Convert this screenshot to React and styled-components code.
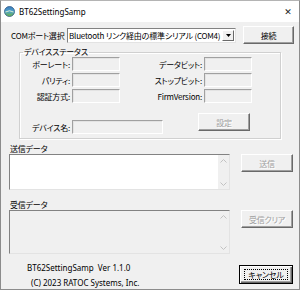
import React from "react";
import styled, { createGlobalStyle } from "styled-components";

const Global = createGlobalStyle`
  html, body { margin: 0; padding: 0; background: #ffffff; }
  body {
    font-family: "Noto Sans CJK JP", "Liberation Sans", sans-serif;
    font-size: 8px;
    letter-spacing: -0.2px;
    font-feature-settings: "palt";
  }
  * { box-sizing: border-box; }
`;

const Window = styled.div`
  width: 300px;
  height: 290px;
  border: 1px solid #8c8c8c;
  border-top-color: #b4b4b4;
  background: #f0f0f0;
  display: flex;
  flex-direction: column;
  overflow: hidden;
`;

const TitleBar = styled.div`
  height: 21px;
  background: #ffffff;
  display: flex;
  align-items: center;
  padding-left: 3px;
  padding-right: 6px;
  flex-shrink: 0;
`;

const Title = styled.span`
  font-family: "Noto Sans", "Liberation Sans", sans-serif;
  font-size: 8px;
  letter-spacing: 0;
  color: #000;
  margin-left: 4px;
  flex: 1;
`;

const CloseGlyph = styled.span`
  font-family: "DejaVu Sans", sans-serif;
  font-size: 9px;
  color: #222;
  width: 10px;
  text-align: center;
`;

const Body = styled.div`
  flex: 1;
  display: flex;
  flex-direction: column;
  padding: 4px 0 0 8px;
`;

const PortRow = styled.div`
  display: flex;
  align-items: center;
  height: 18px;
  padding-left: 2px;
`;

const Label = styled.span`
  color: #000;
  white-space: nowrap;
  line-height: 11px;
  width: ${(p) => (p.$w ? `${p.$w}px` : "auto")};
  text-align: ${(p) => (p.$right ? "right" : "left")};
`;

const Combo = styled.div`
  width: 169px;
  height: 15px;
  background: #fff;
  border: 1px solid;
  border-color: #828282 #e3e3e3 #e3e3e3 #828282;
  display: flex;
  align-items: center;
  padding-left: 1px;
  padding-right: 1px;
`;

const ComboText = styled.span`
  flex: 1;
  white-space: nowrap;
  overflow: hidden;
  color: #000;
  line-height: 11px;
`;

const ComboButton = styled.span`
  width: 12px;
  height: 11px;
  background: #f0f0f0;
  border: 1px solid;
  border-color: #fff #696969 #696969 #fff;
  display: flex;
  align-items: center;
  justify-content: center;
`;

const Button = styled.button`
  font-family: "Noto Sans CJK JP", "Liberation Sans", sans-serif;
  font-size: 8px;
  letter-spacing: -0.2px;
  font-feature-settings: "palt";
  width: ${(p) => p.$w || 52}px;
  height: ${(p) => p.$h || 18}px;
  margin: 0;
  margin-left: ${(p) => p.$ml || 0}px;
  margin-right: ${(p) => p.$mr || 0}px;
  margin-top: ${(p) => p.$mt || 0}px;
  padding: 0;
  background: #f0f0f0;
  border: 1px solid;
  border-color: ${(p) => (p.$default ? "#000" : "#fff #696969 #696969 #fff")};
  box-shadow: ${(p) =>
    p.$default
      ? "inset 1px 1px #fff, inset -1px -1px #696969, inset -2px -2px #a0a0a0"
      : "inset -1px -1px #a0a0a0"};
  color: ${(p) => (p.disabled ? "#a0a0a0" : "#000")};
  text-shadow: ${(p) => (p.disabled ? "1px 1px #fff" : "none")};
  display: flex;
  align-items: center;
  justify-content: center;
  flex-shrink: 0;
`;

const FocusRing = styled.span`
  display: flex;
  align-items: center;
  justify-content: center;
  width: 44px;
  height: 11px;
  border: 1px dotted #000;
  white-space: nowrap;
`;

const Group = styled.fieldset`
  margin: 3px 0 0 10px;
  padding: 0 0 4px 0;
  width: 262px;
  border: 1px solid #d0d0d0;
  box-shadow: inset 1px 1px #fff, 1px 1px #fff;
  min-width: 0;
`;

const Legend = styled.legend`
  padding: 0 1px;
  margin-left: 3px;
  line-height: 10px;
  color: #000;
`;

const StatusGrid = styled.div`
  display: grid;
  grid-template-columns: 50px 48px 80px 48px;
  column-gap: 2px;
  row-gap: 2px;
  align-items: center;
`;

const Field = styled.div`
  width: ${(p) => p.$w || 48}px;
  height: 14px;
  background: #f0f0f0;
  border: 1px solid;
  border-color: #a0a0a0 #fff #fff #a0a0a0;
  box-shadow: inset 1px 1px #e3e3e3;
`;

const NameRow = styled.div`
  display: flex;
  align-items: flex-start;
  margin-top: 10px;
`;

const NameLabelBox = styled.div`
  display: flex;
  align-items: center;
  gap: 2px;
  margin-top: 7px;
`;

const SectionLabel = styled.div`
  color: #000;
  line-height: 11px;
  margin-top: ${(p) => p.$mt || 0}px;
  padding-left: 1px;
`;

const DataRow = styled.div`
  display: flex;
  align-items: flex-start;
  gap: 11px;
`;

const DataBox = styled.div`
  width: 221px;
  height: ${(p) => p.$h}px;
  background: ${(p) => (p.$disabled ? "#f0f0f0" : "#fff")};
  border: 1px solid;
  border-color: #828282 #e3e3e3 #e3e3e3 #828282;
  display: flex;
  justify-content: flex-end;
`;

const ScrollBar = styled.div`
  width: 11px;
  background: #f0f0f0;
  display: flex;
  flex-direction: column;
  justify-content: space-between;
  align-items: center;
  padding: 4px 0 3px;
`;

const Footer = styled.div`
  display: flex;
  align-items: flex-start;
  margin-top: 4px;
`;

const Credits = styled.div`
  flex: 1;
  display: flex;
  flex-direction: column;
  padding-left: 18px;
  padding-top: 2px;
  font-family: "Noto Sans", "Liberation Sans", sans-serif;
  font-size: 8px;
  letter-spacing: 0;
`;

const CreditLine = styled.span`
  line-height: 15px;
  padding-left: ${(p) => p.$indent || 0}px;
  white-space: nowrap;
  color: #000;
`;

const Chevron = ({ up }) => (
  <svg width="7" height="4" viewBox="0 0 7 4">
    <path
      d={up ? "M0.5 3.5 L3.5 0.5 L6.5 3.5" : "M0.5 0.5 L3.5 3.5 L6.5 0.5"}
      fill="none"
      stroke="#c2c2c2"
      strokeWidth="1"
    />
  </svg>
);

const AppIcon = () => (
  <svg width="11" height="11" viewBox="0 0 11 11">
    <defs>
      <linearGradient id="g" x1="0" y1="0" x2="0" y2="1">
        <stop offset="0" stopColor="#3d7bbf" />
        <stop offset="0.5" stopColor="#4fa3c9" />
        <stop offset="1" stopColor="#6cb33f" />
      </linearGradient>
    </defs>
    <circle cx="5.5" cy="5.5" r="5" fill="url(#g)" stroke="#2c5a86" strokeWidth="0.8" />
    <path d="M1.5 6 Q5.5 3.5 9.5 6" fill="none" stroke="#e8f3d0" strokeWidth="0.9" />
  </svg>
);

export default function App() {
  return (
    <>
      <Global />
      <Window>
        <TitleBar>
          <AppIcon />
          <Title>BT62SettingSamp</Title>
          <CloseGlyph>✕</CloseGlyph>
        </TitleBar>
        <Body>
          <PortRow>
            <Label $w={56}>COMポート選択</Label>
            <Combo>
              <ComboText>Bluetooth リンク経由の標準シリアル (COM4)</ComboText>
              <ComboButton>
                <svg width="5" height="3" viewBox="0 0 5 3">
                  <path d="M0 0 H5 L2.5 3 Z" fill="#000" />
                </svg>
              </ComboButton>
            </Combo>
            <Button $w={51} $h={18} $ml={7}>接続</Button>
          </PortRow>

          <Group>
            <Legend>デバイスステータス</Legend>
            <StatusGrid>
              <Label $right>ボーレート:</Label>
              <Field />
              <Label $right>データビット:</Label>
              <Field />
              <Label $right>パリティ:</Label>
              <Field />
              <Label $right>ストップビット:</Label>
              <Field />
              <Label $right>認証方式:</Label>
              <Field />
              <Label $right>FirmVersion:</Label>
              <Field />
            </StatusGrid>
            <NameRow>
              <NameLabelBox>
                <Label $w={50} $right>デバイス名:</Label>
                <Field $w={91} />
              </NameLabelBox>
              <Button $w={52} $h={18} $ml={35} disabled>設定</Button>
            </NameRow>
          </Group>

          <SectionLabel $mt={4}>送信データ</SectionLabel>
          <DataRow>
            <DataBox $h={36}>
              <ScrollBar>
                <Chevron up />
                <Chevron />
              </ScrollBar>
            </DataBox>
            <Button $w={52} $h={18} disabled>送信</Button>
          </DataRow>

          <SectionLabel $mt={9}>受信データ</SectionLabel>
          <DataRow>
            <DataBox $h={44} $disabled>
              <ScrollBar>
                <Chevron up />
                <Chevron />
              </ScrollBar>
            </DataBox>
            <Button $w={52} $h={18} disabled>受信クリア</Button>
          </DataRow>

          <Footer>
            <Credits>
              <CreditLine>BT62SettingSamp&nbsp;&nbsp;Ver 1.1.0</CreditLine>
              <CreditLine $indent={4}>(C) 2023 RATOC Systems, Inc.</CreditLine>
            </Credits>
            <Button $w={54} $h={19} $default $mr={6} $mt={7}>
              <FocusRing>キャンセル</FocusRing>
            </Button>
          </Footer>
        </Body>
      </Window>
    </>
  );
}
